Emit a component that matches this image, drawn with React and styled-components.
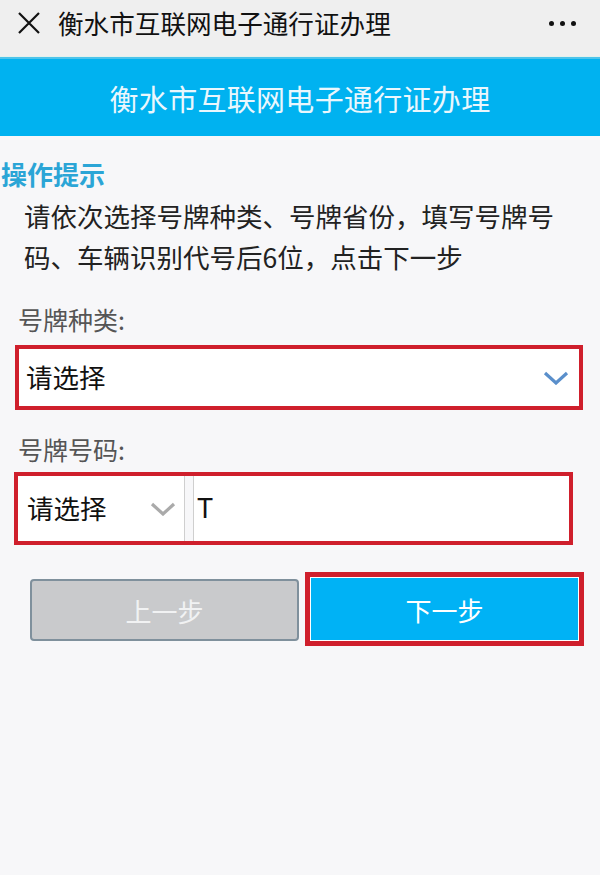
import React from 'react'
import styled, { createGlobalStyle } from 'styled-components'

const GlobalStyle = createGlobalStyle`
  html, body {
    margin: 0;
    padding: 0;
    background: #f7f7f9;
  }
  body {
    font-family: "Noto Sans CJK SC", "Noto Sans", sans-serif;
  }
  * { box-sizing: border-box; }
`

const Page = styled.div`
  width: 600px;
  min-height: 875px;
  background: #f7f7f9;
`

const TopBar = styled.div`
  height: 57px;
  background: #efefef;
  display: flex;
  align-items: center;
  padding: 0 24px 0 17px;
  border-bottom: 1px solid #e3f1ec;
`

const TopTitle = styled.div`
  flex: 1;
  margin-left: 17px;
  font-size: 25.6px;
  color: #111;
  line-height: 1;
  margin-top: -10px;
`

const Dots = styled.div`
  display: flex;
  gap: 6px;
  margin-top: -10px;
  span {
    width: 5px;
    height: 5px;
    border-radius: 50%;
    background: #111;
  }
`

const Banner = styled.div`
  height: 79px;
  background: #00b2f0;
  display: flex;
  align-items: center;
  justify-content: center;
  color: #eaf7fd;
  font-size: 29px;
  letter-spacing: 0.3px;
  border-top: 2px solid #4ec3ea;
`

const Content = styled.div`
  padding: 23px 0 0;
`

const HintTitle = styled.div`
  padding-left: 1px;
  font-size: 26px;
  line-height: 30px;
  font-weight: 700;
  color: #2ba5d6;
`

const HintText = styled.p`
  margin: 6px 0 0;
  padding-left: 24px;
  width: 570px;
  font-size: 26.5px;
  line-height: 41px;
  color: #222;
`

const Label = styled.div`
  margin-top: ${p => p.$top}px;
  padding-left: 18px;
  font-size: 25px;
  line-height: 34px;
  color: #555;
`

const Highlight = styled.div`
  border: 4px solid #cf1f2c;
  background: #fff;
`

const SelectBox = styled(Highlight)`
  margin: 9px 17px 0 15px;
  height: 65px;
  display: flex;
  align-items: center;
  justify-content: space-between;
  padding: 0 10px 0 7px;
`

const ComboBox = styled(Highlight)`
  margin: 6px 27px 0 14px;
  height: 73px;
  display: flex;
  background: #f7f7f9;
`

const SmallSelect = styled.div`
  width: 167px;
  background: #fff;
  border-right: 1px solid #cfcfcf;
  display: flex;
  align-items: center;
  justify-content: space-between;
  padding: 0 8px 0 9px;
`

const TextInput = styled.div`
  flex: 1;
  margin-left: 8px;
  background: #fff;
  border-left: 1px solid #cfcfcf;
  display: flex;
  align-items: center;
  padding-left: 3px;
  font-family: "Roboto", "Noto Sans", sans-serif;
  font-size: 27px;
  color: #111;
`

const SelectText = styled.span`
  font-size: 26.5px;
  color: #111;
  margin-top: -2px;
`

const ButtonRow = styled.div`
  margin-top: 27px;
  padding-left: 30px;
  display: flex;
  align-items: flex-start;
`

const Button = styled.div`
  height: 62px;
  display: flex;
  align-items: center;
  justify-content: center;
  font-size: 26px;
  color: ${p => p.$primary ? '#ffffff' : '#f1f2f3'};
  background: ${p => p.$primary ? '#00b2f5' : '#c9cacc'};
  border-radius: ${p => p.$primary ? '0' : '4px'};
  border: ${p => p.$primary ? 'none' : '2px solid #7f909c'};
`

const BackButton = styled(Button)`
  width: 269px;
  margin-top: 7px;
`

const NextWrap = styled.div`
  margin-left: 6px;
  border: 5px solid #cf1f2c;
  padding: 1px;
  background: #fff;
  width: 279px;
`

const Chevron = ({ color }) => (
  <svg width="26" height="14" viewBox="0 0 26 14">
    <polyline points="2,2 13,12 24,2" fill="none" stroke={color} strokeWidth="3.2" strokeLinejoin="miter" />
  </svg>
)

const CloseIcon = () => (
  <svg width="24" height="24" viewBox="0 0 24 24" style={{ marginTop: -10 }}>
    <path d="M2 2 L22 22 M22 2 L2 22" stroke="#111" strokeWidth="2.2" />
  </svg>
)

export default function App() {
  return (
    <Page>
      <GlobalStyle />
      <TopBar>
        <CloseIcon />
        <TopTitle>衡水市互联网电子通行证办理</TopTitle>
        <Dots><span /><span /><span /></Dots>
      </TopBar>
      <Banner>衡水市互联网电子通行证办理</Banner>
      <Content>
        <HintTitle>操作提示</HintTitle>
        <HintText>请依次选择号牌种类、号牌省份，填写号牌号码、车辆识别代号后6位，点击下一步</HintText>

        <Label $top={25}>号牌种类:</Label>
        <SelectBox>
          <SelectText>请选择</SelectText>
          <Chevron color="#5a8fcb" />
        </SelectBox>

        <Label $top={22}>号牌号码:</Label>
        <ComboBox>
          <SmallSelect>
            <SelectText>请选择</SelectText>
            <Chevron color="#aaaaaa" />
          </SmallSelect>
          <TextInput>T</TextInput>
        </ComboBox>

        <ButtonRow>
          <BackButton>上一步</BackButton>
          <NextWrap>
            <Button $primary>下一步</Button>
          </NextWrap>
        </ButtonRow>
      </Content>
    </Page>
  )
}
